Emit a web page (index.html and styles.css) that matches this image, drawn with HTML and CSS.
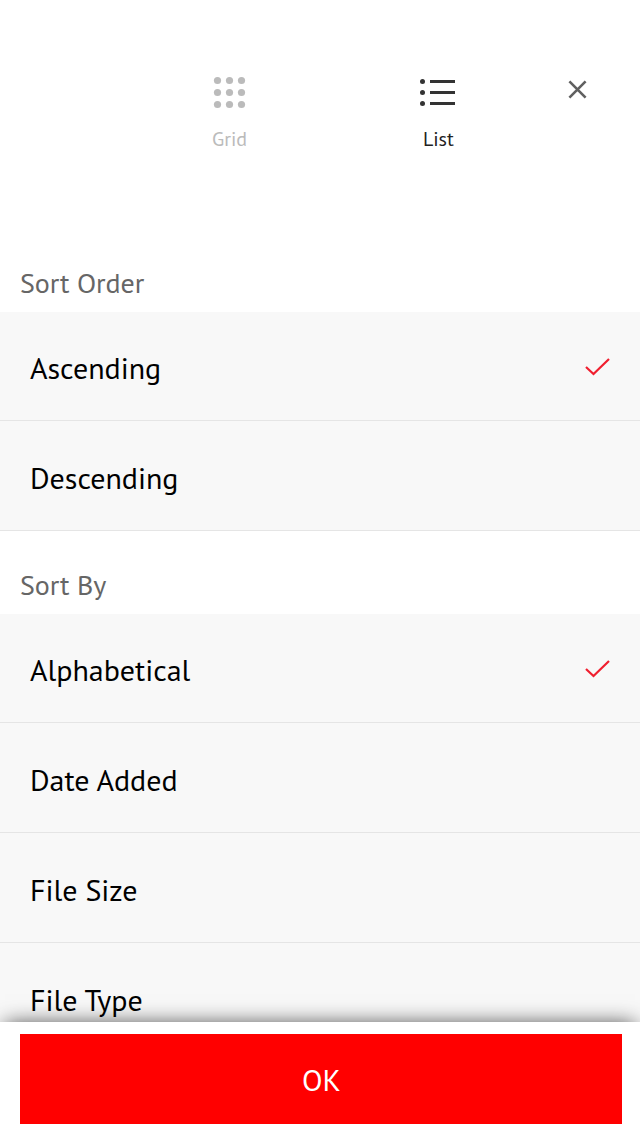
FILE: index.html
```html
<!DOCTYPE html>
<html lang="en">
<head>
<meta charset="utf-8">
<title>View options</title>
<link rel="stylesheet" href="styles.css">
</head>
<body>
<div class="screen">
  <header class="views">
    <div class="view grid">
      <svg width="36" height="36" viewBox="0 0 36 36" fill="#bbb"><circle cx="5.5" cy="6.5" r="3.6"/><circle cx="17.5" cy="6.5" r="3.6"/><circle cx="29.5" cy="6.5" r="3.6"/><circle cx="5.5" cy="18.5" r="3.6"/><circle cx="17.5" cy="18.5" r="3.6"/><circle cx="29.5" cy="18.5" r="3.6"/><circle cx="5.5" cy="30.5" r="3.6"/><circle cx="17.5" cy="30.5" r="3.6"/><circle cx="29.5" cy="30.5" r="3.6"/></svg>
      <span class="view-label">Grid</span>
    </div>
    <div class="view list-view">
      <svg width="36" height="36" viewBox="0 0 36 36" fill="#333"><circle cx="2.5" cy="7.5" r="2.5"/><circle cx="2.5" cy="18.5" r="2.5"/><circle cx="2.5" cy="29.5" r="2.5"/><path d="M10 6h25v3H10zM10 17h25v3H10zM10 28h25v3H10z"/></svg>
      <span class="view-label">List</span>
    </div>
    <svg class="close" width="20" height="20" viewBox="0 0 20 20"><path d="M1.4 1.4 17.6 17.6M17.6 1.4 1.4 17.6"/></svg>
  </header>
  <main class="options">
    <h2 class="heading">Sort Order</h2>
    <ul class="rows">
      <li class="row">Ascending<svg class="check" width="26" height="20" viewBox="0 0 26 20"><path d="M1 10 8.5 17 24 2"/></svg></li>
      <li class="row">Descending</li>
    </ul>
    <h2 class="heading">Sort By</h2>
    <ul class="rows">
      <li class="row">Alphabetical<svg class="check" width="26" height="20" viewBox="0 0 26 20"><path d="M1 10 8.5 17 24 2"/></svg></li>
      <li class="row">Date Added</li>
      <li class="row">File Size</li>
      <li class="row">File Type</li>
    </ul>
  </main>
  <footer class="footer"><button class="ok">OK</button></footer>
</div>
</body>
</html>
```
FILE: styles.css
```css
* { box-sizing: border-box; }
body { margin: 0; background: #fff; font-family: "PT Sans", "Noto Sans", sans-serif; }
.screen { height: 1136px; display: flex; flex-direction: column; overflow: hidden; }
.views { flex: none; height: 229px; display: flex; padding: 74px 0 0 212px; }
.view { display: flex; flex-direction: column; width: 208px; }
.view svg { display: block; }
.view-label { display: block; width: max-content; margin-top: 15px; font-size: 20px; line-height: 28px; letter-spacing: -.05px; }
.grid { color: #bbb; }
.list-view { color: #222; width: 148px; }
.list-view .view-label { margin-left: 3px; }
.close { margin-top: 6px; fill: none; stroke: #606060; stroke-width: 2.6; }
.options { flex: 1; min-height: 0; overflow: hidden; }
.heading { height: 83px; margin: 0; padding: 34px 0 0 20px; font-size: 28px; line-height: 40px; font-weight: 400; letter-spacing: -.05px; color: #666; }
.rows { margin: 0; padding: 0; list-style: none; }
.row { height: 110px; padding: 37px 29px 0 30px; display: flex; justify-content: space-between; background: #f8f8f8; border-bottom: 1px solid #e5e5e5; font-size: 30px; line-height: 40px; letter-spacing: -.03px; color: #000; }
.row:first-child { height: 109px; padding-top: 36px; }
.check { margin-top: 9px; fill: none; stroke: #f01f2f; stroke-width: 2.2; }
.footer { flex: none; height: 114px; padding: 12px 18px 12px 20px; position: relative; background: #fff; box-shadow: 0 -3px 20px -5px rgba(0,0,0,.75); }
.ok { display: block; width: 100%; height: 90px; border: 0; padding: 2px 0 0 1px; background: #f00; color: #fff; font: 400 30px/40px "PT Sans", "Noto Sans", sans-serif; }
```
